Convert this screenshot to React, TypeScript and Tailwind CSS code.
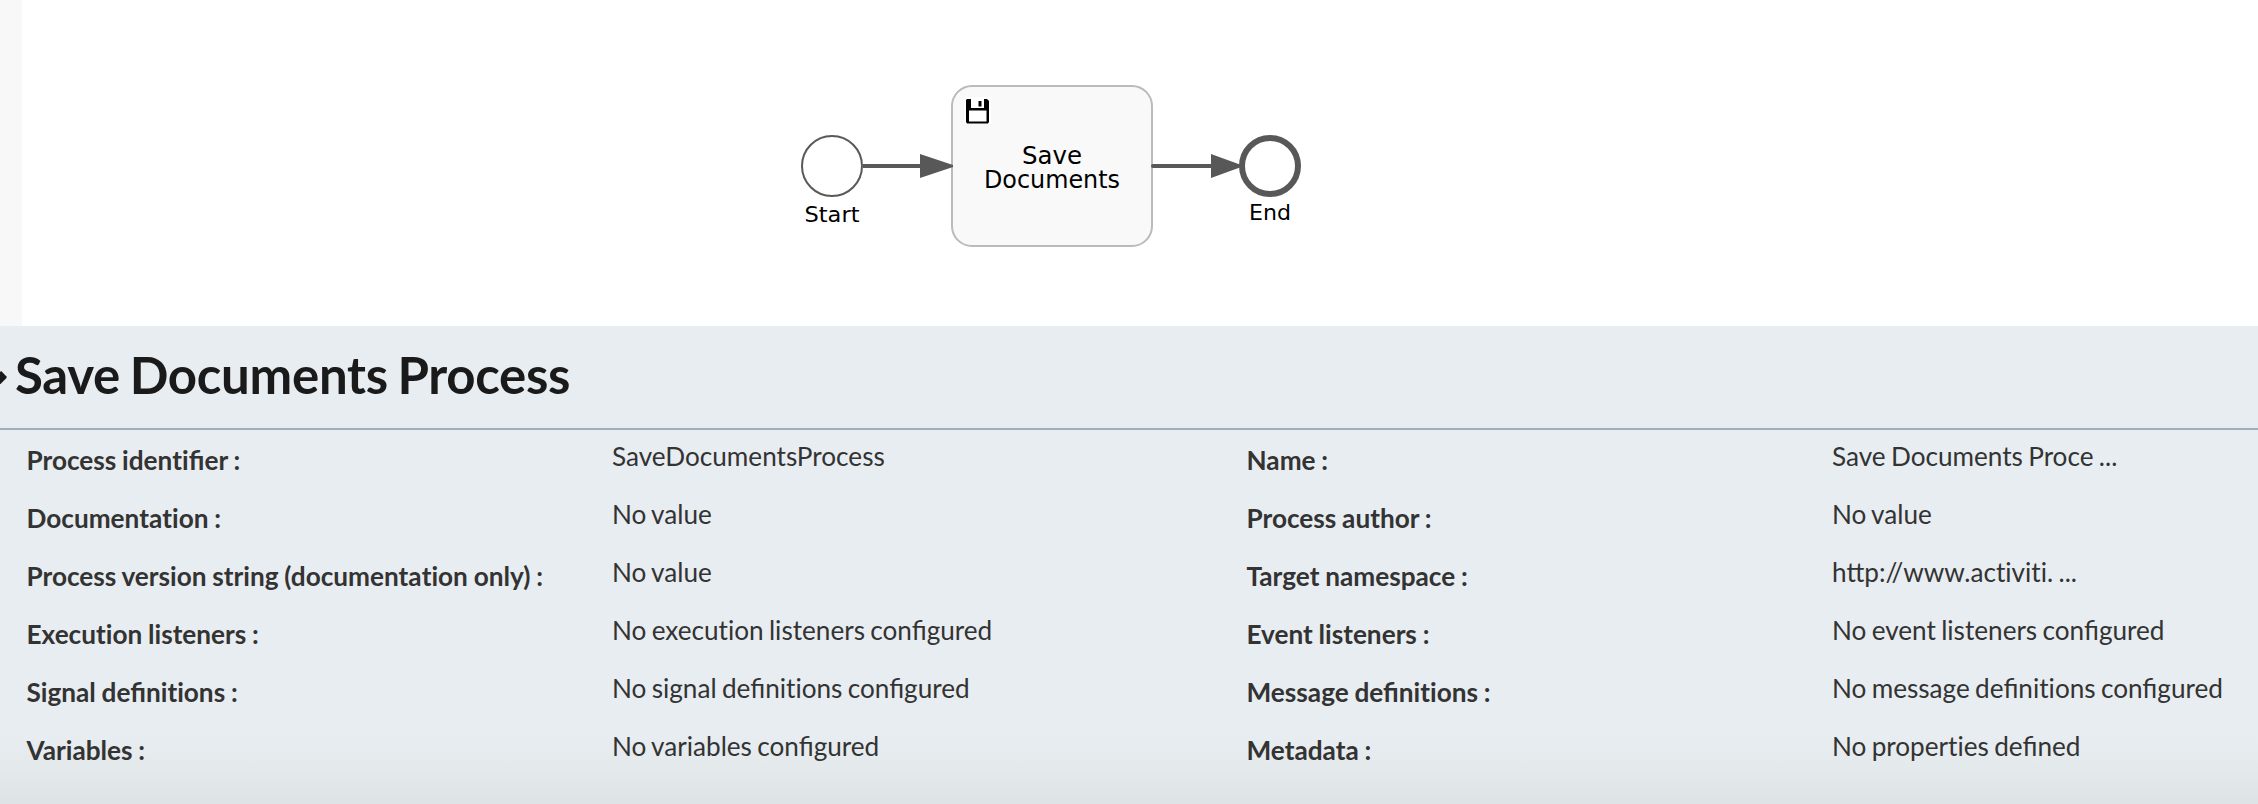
import { Fragment } from "react";

const rows: [string, string, string, string][] = [
  ["Process identifier :", "SaveDocumentsProcess", "Name :", "Save Documents Proce ..."],
  ["Documentation :", "No value", "Process author :", "No value"],
  ["Process version string (documentation only) :", "No value", "Target namespace :", "http://www.activiti. ..."],
  ["Execution listeners :", "No execution listeners configured", "Event listeners :", "No event listeners configured"],
  ["Signal definitions :", "No signal definitions configured", "Message definitions :", "No message definitions configured"],
  ["Variables :", "No variables configured", "Metadata :", "No properties defined"],
];

// Keeps the "fi" ligature but sets "ti" as two separate letters.
function Plain({ text }: { text: string }) {
  return (
    <>
      {text.split(/(ti)/).map((part, i) =>
        part === "ti" ? (
          <span key={i} className="[font-variant-ligatures:none]">ti</span>
        ) : (
          <Fragment key={i}>{part}</Fragment>
        ),
      )}
    </>
  );
}

function Label({ text }: { text: string }) {
  return (
    <dt className="pt-[14px] pl-[0.5px] text-[26.2px] font-bold [word-spacing:-0.6px]">
      <Plain text={text} />
    </dt>
  );
}

function Value({ text }: { text: string }) {
  return (
    <dd className="pt-[10px] text-[26.15px] [word-spacing:-1.4px]">
      <Plain text={text} />
    </dd>
  );
}

function Diagram() {
  return (
    <svg width="520" height="180" viewBox="790 76 520 180" className="font-['DejaVu_Sans',Verdana,sans-serif]">
      <g fill="none" stroke="#585858">
        <circle cx="832" cy="166" r="30" strokeWidth="2" fill="#fff" />
        <path d="M863 166H922" strokeWidth="4" />
      </g>
      <rect x="952" y="86" width="200" height="160" rx="20" fill="#f9f9f9" stroke="#bbbbbb" strokeWidth="2" />
      <path d="M1153 166H1213" stroke="#585858" strokeWidth="4" strokeLinecap="round" />
      <path d="M920 154L953 165V167L920 178Z" fill="#585858" />
      <path d="M1211 154L1244 166L1211 178Z" fill="#585858" />
      <circle cx="1270" cy="166" r="28" strokeWidth="6" stroke="#585858" fill="#fff" />
      <rect x="964" y="97" width="27" height="27" fill="#fff" />
      <path d="M966 100L967 99H987L989 101V122L988 123.500H967L966 122Z" fill="#000" />
      <path d="M971 99H984V108H971Z" fill="#fff" />
      <path d="M978.500 101H981.500V106.500H978.500Z" fill="#000" />
      <rect x="969" y="110.500" width="17.500" height="11" fill="#fff" />
      <text x="804.500" y="222" fontSize="22" textLength="55" lengthAdjust="spacingAndGlyphs">Start</text>
      <text x="1022" y="164" fontSize="24" textLength="60" lengthAdjust="spacingAndGlyphs">Save</text>
      <text x="984" y="188" fontSize="24" textLength="136" lengthAdjust="spacingAndGlyphs">Documents</text>
      <text x="1249" y="220" fontSize="22" textLength="42" lengthAdjust="spacingAndGlyphs">End</text>
    </svg>
  );
}

export default function App() {
  return (
    <div className="flex h-[804px] w-[2258px] flex-col overflow-hidden bg-white font-[Lato,sans-serif] text-[#333]">
      <div className="flex h-[326px]">
        <div className="w-[22px] bg-[#f8f8f8]" />
        <div className="pt-[76px] pl-[768px]">
          <Diagram />
        </div>
      </div>
      <section className="flex h-[478px] flex-col bg-[linear-gradient(to_bottom,#e8edf1_0,#e8edf1_410px,#e3e8eb_450px,#dde2e5_478px)]">
        <header className="flex h-[104px] items-center border-b-2 border-[#a2acbc]">
          <svg width="7" height="13" viewBox="0 0 7 13" className="shrink-0">
            <path d="M0 1L1.200 0L6.500 5.500V7L0.500 13H0Z" fill="#1a1a1a" />
          </svg>
          <h1 className="ml-[8px] pb-[5px] text-[51px] leading-[62px] font-bold tracking-[-0.3px] whitespace-nowrap text-[#1a1a1a] [word-spacing:-2.5px]">
            Save Documents Process
          </h1>
        </header>
        <dl className="flex flex-col">
          {rows.map((r) => (
            <div key={r[0]} className="grid h-[58px] grid-cols-[586px_634px_586px_1fr] pl-[26px] leading-[32px] whitespace-nowrap">
              <Label text={r[0]} />
              <Value text={r[1]} />
              <Label text={r[2]} />
              <Value text={r[3]} />
            </div>
          ))}
        </dl>
      </section>
    </div>
  );
}
